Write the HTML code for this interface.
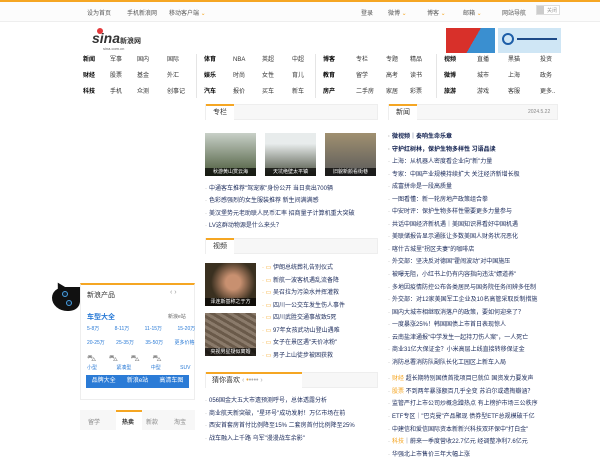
<!DOCTYPE html>
<html><head><meta charset="utf-8"><style>
*{margin:0;padding:0;box-sizing:border-box}
body{width:600px;height:450px;overflow:hidden;background:#fff;position:relative;font-family:"Liberation Sans","Noto Sans CJK SC",sans-serif;font-size:6px;color:#333}
.a{position:absolute;white-space:nowrap}
.b{font-weight:bold;color:#000}
.hd{position:absolute;height:16px;background:#f7f7f7;border:1px solid #eee}
.hd span{position:absolute;left:0;top:-1px;height:16px;width:28px;background:#fff;border-top:2px solid #f5a623;font-size:7px;line-height:14px;text-align:center;color:#333}
.li{position:absolute;white-space:nowrap;color:#1a2a5a;font-size:6px}
.li:before{content:"·";color:#999;margin-right:2px}
.img{position:absolute;background:linear-gradient(#8a9a88,#4a5a48)}
.cap{position:absolute;left:0;right:0;bottom:0;height:8px;background:rgba(0,0,0,.7);color:#fff;font-size:5px;line-height:8px;text-align:center}
.nv{position:absolute;white-space:nowrap;line-height:16px}
</style></head><body>
<div class="a" style="left:0;top:0;width:600px;height:2px;background:#f5a623"></div>
<div class="a" style="left:0;top:2px;width:600px;height:20px;background:#fcfcfc;border-bottom:1px solid #eee"></div>
<div class="a" style="left:87px;top:8px;color:#555">设为首页</div>
<div class="a" style="left:127px;top:8px;color:#555">手机新浪网</div>
<div class="a" style="left:169px;top:8px;color:#555">移动客户端 <span style="color:#f5a623">⌄</span></div>
<div class="a" style="left:361px;top:8px;color:#555">登录</div>
<div class="a" style="left:388px;top:8px;color:#555">微博 <span style="color:#f5a623">⌄</span></div>
<div class="a" style="left:427px;top:8px;color:#555">博客 <span style="color:#f5a623">⌄</span></div>
<div class="a" style="left:463px;top:8px;color:#555">邮箱 <span style="color:#f5a623">⌄</span></div>
<div class="a" style="left:502px;top:8px;color:#555">网站导航</div>
<div class="a" style="left:536px;top:5px;width:24px;height:10px;border:1px solid #ddd;background:#fff"></div>
<div class="a" style="left:537px;top:6px;width:7px;height:8px;background:#ccc"></div>
<div class="a" style="left:547px;top:7px;font-size:5px;color:#999">关闭</div>

<div class="a" style="left:92px;top:30px;font-size:14px;font-style:italic;font-weight:bold;color:#333">sina<span style="font-size:7px;font-style:normal">新浪网</span></div>
<div class="a" style="left:97px;top:28px;width:6px;height:6px;border-radius:50%;background:#e4393c"></div>
<div class="a" style="left:103px;top:46px;font-size:4px;color:#666">sina.com.cn</div>
<div class="a" style="left:446px;top:28px;width:49px;height:25px;background:linear-gradient(120deg,#d8302a 55%,#3a8fd0 55%)"></div>
<div class="a" style="left:498px;top:28px;width:63px;height:25px;background:#cfe6f5"></div>
<div class="a" style="left:502px;top:33px;width:12px;height:12px;border:2px solid #1d5ea8;border-radius:50%"></div>
<div class="a" style="left:517px;top:38px;width:40px;height:2px;background:#1d4a88"></div>

<div class="a" style="left:196px;top:54px;width:1px;height:44px;background:#e5e5e5"></div>
<div class="a" style="left:315px;top:54px;width:1px;height:44px;background:#e5e5e5"></div>
<div class="a" style="left:436px;top:54px;width:1px;height:44px;background:#e5e5e5"></div>
<div style="position:absolute;left:80px;top:52px;font-size:6px">
<div class="nv" style="left:3px"><b class="b">新闻</b><br><b class="b">财经</b><br><b class="b">科技</b></div>
<div class="nv" style="left:30px">军事<br>股票<br>手机</div>
<div class="nv" style="left:57px">国内<br>基金<br>众测</div>
<div class="nv" style="left:87px">国际<br>外汇<br>创事记</div>
<div class="nv" style="left:124px"><b class="b">体育</b><br><b class="b">娱乐</b><br><b class="b">汽车</b></div>
<div class="nv" style="left:153px">NBA<br>时尚<br>报价</div>
<div class="nv" style="left:182px">英超<br>女性<br>买车</div>
<div class="nv" style="left:212px">中超<br>育儿<br>新车</div>
<div class="nv" style="left:243px"><b class="b">博客</b><br><b class="b">教育</b><br><b class="b">房产</b></div>
<div class="nv" style="left:276px">专栏<br>留学<br>二手房</div>
<div class="nv" style="left:306px">专题<br>高考<br>家居</div>
<div class="nv" style="left:330px">精品<br>读书<br>彩票</div>
<div class="nv" style="left:364px"><b class="b">视频</b><br><b class="b">微博</b><br><b class="b">旅游</b></div>
<div class="nv" style="left:397px">直播<br>城市<br>游戏</div>
<div class="nv" style="left:428px">黑猫<br>上海<br>客服</div>
<div class="nv" style="left:460px">投资<br>政务<br>更多..</div>
</div>

<!-- center -->
<div class="hd" style="left:205px;top:104px;width:173px"><span>专栏</span></div>
<div class="img" style="left:205px;top:133px;width:51px;height:43px;background:linear-gradient(#c8d0c8,#4a5a3a)"><div class="cap">秋游黄山赏云海</div></div>
<div class="img" style="left:265px;top:133px;width:51px;height:43px;background:linear-gradient(#e8ecec 25%,#4a5040)"><div class="cap">天坑绝壁太平镇</div></div>
<div class="img" style="left:325px;top:133px;width:51px;height:43px;background:linear-gradient(#a09070,#5a5a5a)"><div class="cap">旧貌新颜看街巷</div></div>
<div class="li" style="left:205px;top:183px">中通客车推荐"驾宠家"身份公开 当日卖出700辆</div>
<div class="li" style="left:205px;top:195px">色彩感强烈的女生服装推荐 新生间满满感</div>
<div class="li" style="left:205px;top:208px">美汉堡势元老助联人民币汇率 招商量子计算机重大突破</div>
<div class="li" style="left:205px;top:220px">LV这群动物源是什么来头？</div>
<div class="hd" style="left:205px;top:238px;width:173px"><span>视频</span></div>
<div class="img" style="left:205px;top:263px;width:51px;height:43px;background:radial-gradient(circle at 55% 45%,#c89070 20%,#3a3020 60%)"><div class="cap">泽连斯基称之于方</div></div>
<div class="img" style="left:205px;top:313px;width:51px;height:43px;background:repeating-linear-gradient(30deg,#8a7a6a 0 3px,#6a5a4a 3px 6px)"><div class="cap">央视男星疑似离婚</div></div>
<div style="position:absolute;left:262px;top:262px;line-height:12.5px;color:#1a2a5a;white-space:nowrap">
<div><span style="color:#f5a623">· ▭</span> 伊朗总统葬礼告别仪式</div>
<div><span style="color:#f5a623">· ▭</span> 新航一波客机遇乱流备降</div>
<div><span style="color:#f5a623">· ▭</span> 吴召拉为污染水并挥灌救</div>
<div><span style="color:#f5a623">· ▭</span> 四川一公交车发生伤人事件</div>
<div><span style="color:#f5a623">· ▭</span> 四川武胜交通事故致5死</div>
<div><span style="color:#f5a623">· ▭</span> 97年女孩武功山登山遇难</div>
<div><span style="color:#f5a623">· ▭</span> 女子在景区遇"天价冰粉"</div>
<div><span style="color:#f5a623">· ▭</span> 男子上山徒步被困获救</div>
</div>
<div class="hd" style="left:205px;top:372px;width:173px"><span style="width:96px;text-align:left;padding-left:6px">猜你喜欢 <span style="position:static;border:0;color:#aaa">‹ <b style="color:#f5a623">•</b>•••• ›</span></span></div>
<div style="position:absolute;left:205px;top:395px;line-height:12.5px;white-space:nowrap">
<div class="li" style="position:static">056国金大五大市遗预测呼号，总体透露分析</div>
<div class="li" style="position:static">商业航天新突破，"星环号"成功发射！万亿市场在前</div>
<div class="li" style="position:static">西安首套房首付比例降至15% 二套房首付比例降至25%</div>
<div class="li" style="position:static">战车融入上千路 乌军"漫漫战车余影"</div>
</div>

<!-- right -->
<div class="hd" style="left:388px;top:104px;width:170px"><span>新闻</span></div>
<div class="a" style="left:528px;top:109px;font-size:5px;color:#888">2024.5.22</div>
<div style="position:absolute;left:388px;top:131px;line-height:12.55px;white-space:nowrap">
<div class="li" style="position:static;color:#0a1a4a;font-weight:bold">微视频｜奏响生命乐章</div>
<div class="li" style="position:static;color:#0a1a4a;font-weight:bold">守护红树林，保护生物多样性 习语品读</div>
<div class="li" style="position:static">上海：从机器人密度看企业向"新"力量</div>
<div class="li" style="position:static">专家：中国产业规模持续扩大 关注经济新增长极</div>
<div class="li" style="position:static">成富拼命是一段高质量</div>
<div class="li" style="position:static">一图看懂：新一轮房地产政策组合拳</div>
<div class="li" style="position:static">中安时评：保护生物多样性需要更多力量参与</div>
<div class="li" style="position:static">共话中国经济新机遇｜美国知识界看好中国机遇</div>
<div class="li" style="position:static">美联储报告显示通胀让多数美国人财务状况恶化</div>
<div class="li" style="position:static">喀什古城里"拐区夫妻"的咖啡店</div>
<div class="li" style="position:static">外交部：坚决反对德国"霍闹波动"对中国施压</div>
<div class="li" style="position:static">被曝无阻，小红书上仍有内容指向违法"嫖道养"</div>
<div class="li" style="position:static">多地因疫情防控公布各类居民与国务院任务间辨多任制</div>
<div class="li" style="position:static">外交部：对12家美国军工企业及10名高管采取反制措施</div>
<div class="li" style="position:static">国内大城市相继取消落户的政策，要如何迎来了？</div>
<div class="li" style="position:static">一度暴涨25%！韩国国债上市首日表现惊人</div>
<div class="li" style="position:static">云南盐津通报"中学发生一起持刀伤人案"，一人死亡</div>
<div class="li" style="position:static">商业31亿大保证金？小米高层上线直接转移保证金</div>
<div class="li" style="position:static">消防总署消防队副队长化工园区上新车入局</div>
<div style="height:4px"></div>
<div class="li" style="position:static"><span style="color:#f5a623">财经</span> 超长期特别国债首批项目已就位 国资发力要发声</div>
<div class="li" style="position:static"><span style="color:#f5a623">股票</span> 不到两年暴涨额百几乎全变 苏泊尔或遭掏瓣涵？</div>
<div class="li" style="position:static">监管严打上市公司炒概念蹭热点 有上榜护市场三公秩序</div>
<div class="li" style="position:static">ETF专区｜"巴克曼"产品聚现 债券型ETF总规模破千亿</div>
<div class="li" style="position:static">中建信和爱信国际资本新新兴科技双环保中"打白金"</div>
<div class="li" style="position:static"><span style="color:#f5a623">科技</span>｜蔚来一季度营收22.7亿元 经调整净利7.6亿元</div>
<div class="li" style="position:static">华强北上市售价三年大幅上涨</div>
</div>

<!-- left product -->
<div class="a" style="left:52px;top:287px;width:28px;height:24px;background:#111;border-radius:45% 0 40% 55%"></div>
<div class="a" style="left:55px;top:282px;width:0;height:0;border-left:5px solid transparent;border-right:5px solid transparent;border-bottom:9px solid #111;transform:rotate(-30deg)"></div>
<div class="a" style="left:62px;top:291px;width:6px;height:6px;border:1.5px solid #4aa0e0;border-radius:50%;background:#123"></div>
<div class="a" style="left:66px;top:300px;width:6px;height:6px;border:1.5px solid #4aa0e0;border-radius:50%;background:#123"></div>
<div class="a" style="left:80px;top:283px;width:115px;height:117px;border:1px solid #eee;border-top:2px solid #f5a623"></div>
<div class="a" style="left:87px;top:290px;font-size:7px;color:#333">新浪产品</div>
<div class="a" style="left:170px;top:289px;font-size:7px;color:#999">‹ ›</div>
<div class="a" style="left:87px;top:312px;font-size:7px;color:#2b7bd6;font-weight:bold">车型大全</div>
<div class="a" style="left:168px;top:313px;font-size:5px;color:#666">新浪e站</div>
<div class="a" style="left:87px;top:325px;font-size:5px;color:#2b7bd6;word-spacing:14px">5-8万 8-11万 11-15万 15-20万</div>
<div class="a" style="left:87px;top:339px;font-size:5px;color:#2b7bd6;word-spacing:10px">20-25万 25-35万 35-50万 更多价格</div>
<div class="a" style="left:87px;top:353px;font-size:9px;color:#888;word-spacing:10px">⛍ ⛍ ⛍ ⛍</div>
<div class="a" style="left:87px;top:364px;font-size:5px;color:#2b7bd6;word-spacing:18px">小型 紧凑型 中型 SUV</div>
<div class="a" style="left:86px;top:375px;width:103px;height:13px;background:#2b7bd6;color:#fff;font-size:6px;line-height:13px;display:flex;justify-content:space-around">
<span>品牌大全</span><span>新浪e站</span><span>高清车图</span></div>
<div class="a" style="left:80px;top:410px;width:115px;height:20px;background:#f7f7f7"></div>
<div class="a" style="left:116px;top:410px;width:26px;height:20px;background:#fff;border-top:2px solid #f5a623"></div>
<div class="a" style="left:88px;top:417px;color:#888">留学</div>
<div class="a" style="left:122px;top:417px;color:#333;font-weight:bold">热卖</div>
<div class="a" style="left:146px;top:417px;color:#888">新款</div>
<div class="a" style="left:174px;top:417px;color:#888">淘宝</div>
</body></html>
